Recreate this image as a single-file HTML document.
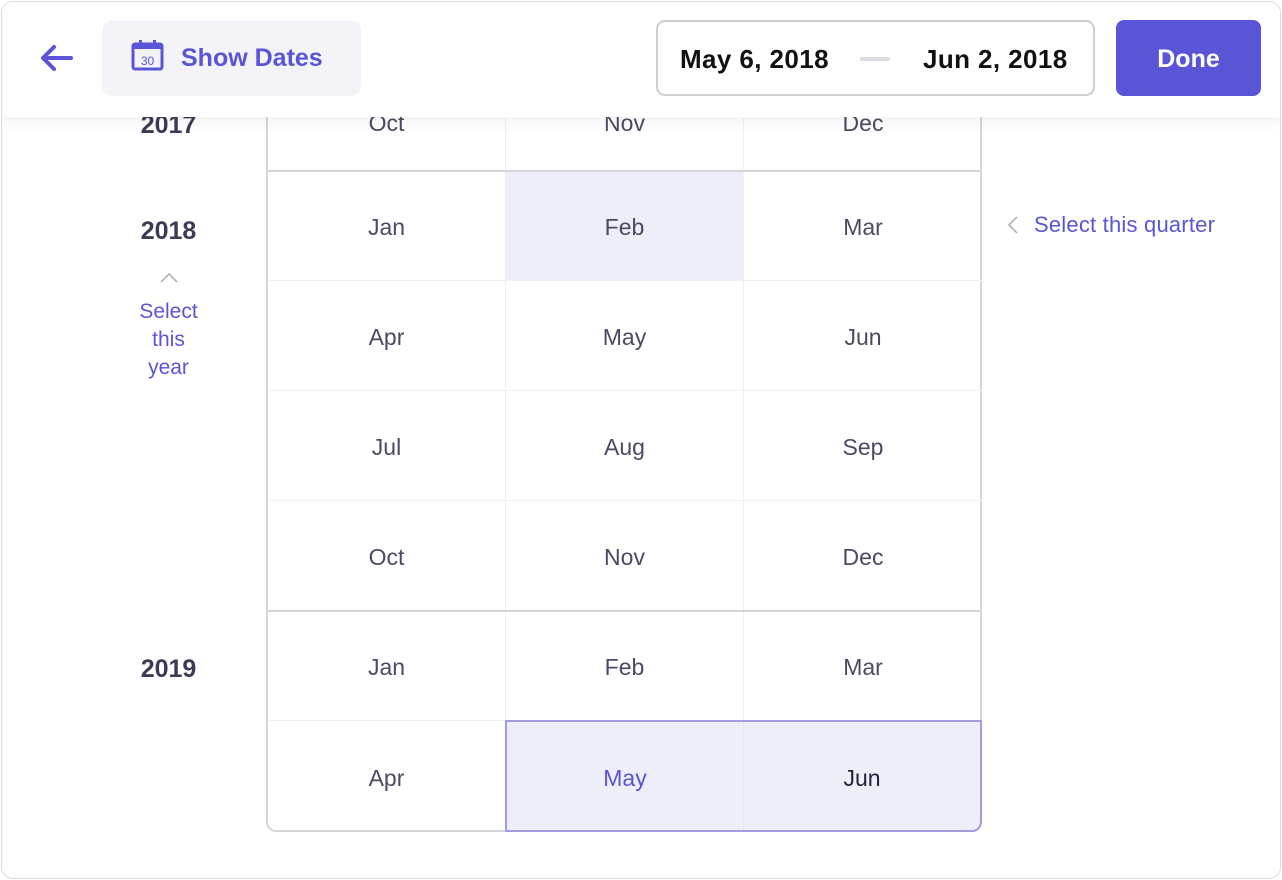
<!DOCTYPE html>
<html><head><style>
*{box-sizing:border-box;margin:0;padding:0}
body{width:1282px;height:880px;background:#fff;font-family:"Liberation Sans",sans-serif;position:relative;overflow:hidden}
.frame{position:absolute;left:1px;top:1px;width:1280px;height:878px;border:1px solid #dcdce0;border-radius:12px;overflow:hidden}
.in{position:absolute;left:-2px;top:-2px;width:1282px;height:880px}
.hdr{position:absolute;left:0;top:0;width:1282px;height:117px;background:#fff;z-index:5;box-shadow:0 6px 14px rgba(0,0,0,0.05)}
.grid{position:absolute;left:266px;top:61px;width:716px;height:771px;border:2px solid #d6d6da;border-top:none;border-radius:0 0 10px 10px}
.c{position:absolute;width:238px;height:110px;display:flex;align-items:center;justify-content:center;font-size:23px;color:#4a4a62;border-right:1px solid #f0f0f4;border-bottom:1px solid #f0f0f4;padding-top:4px}
.yr{position:absolute;left:100px;width:137px;text-align:center;font-size:25px;font-weight:bold;color:#3b3b57}
.sep{position:absolute;left:0;width:712px;height:2px;background:#d6d6da}
</style></head><body>
<div class="frame"><div class="in">
<div class="hdr">
 <svg style="position:absolute;left:38px;top:42px" width="36" height="32" viewBox="0 0 36 32"><path d="M33 16H5M16 5L5 16l11 11" stroke="#5a54d6" stroke-width="4" fill="none" stroke-linecap="round" stroke-linejoin="round"/></svg>
 <div style="position:absolute;left:102px;top:20px;width:259px;height:76px;background:#f4f4f8;border-radius:10px"></div>
 <svg style="position:absolute;left:131px;top:39px" width="33" height="32" viewBox="0 0 33 32"><rect x="2" y="5" width="29" height="25" rx="2" fill="none" stroke="#5a54d6" stroke-width="3"/><rect x="2" y="5" width="29" height="5" fill="#5a54d6"/><rect x="8" y="1" width="3" height="6" fill="#5a54d6"/><rect x="22" y="1" width="3" height="6" fill="#5a54d6"/><text x="16.5" y="26" font-size="12" text-anchor="middle" fill="#5a54d6" font-family="Liberation Sans">30</text></svg>
 <div style="position:absolute;left:181px;top:44px;font-size:25px;font-weight:bold;color:#5a54d6">Show Dates</div>
 <div style="position:absolute;left:656px;top:20px;width:439px;height:76px;border:2px solid #cfcfd3;border-radius:9px"></div>
 <div style="position:absolute;left:680px;top:44px;font-size:26px;font-weight:bold;color:#111;letter-spacing:0.4px">May 6, 2018</div>
 <div style="position:absolute;left:860px;top:57px;width:30px;height:4px;background:#dcdce0;border-radius:2px"></div>
 <div style="position:absolute;left:923px;top:44px;font-size:26px;font-weight:bold;color:#111;letter-spacing:0.4px">Jun 2, 2018</div>
 <div style="position:absolute;left:1116px;top:20px;width:145px;height:76px;background:#5a54d6;border-radius:8px;color:#fff;font-size:25px;font-weight:bold;display:flex;align-items:center;justify-content:center;padding-top:3px">Done</div>
</div>
<div class="yr" style="top:111px">2017</div>
<div class="yr" style="top:217px">2018</div>
<svg style="position:absolute;left:159px;top:272px" width="20" height="12"><path d="M2 10l8-8 8 8" stroke="#aaa" stroke-width="1.5" fill="none"/></svg>
<div style="position:absolute;left:101px;top:298px;width:135px;text-align:center;font-size:21px;line-height:28px;color:#5a54d6">Select<br>this<br>year</div>
<div class="yr" style="top:655px">2019</div>
<svg style="position:absolute;left:1007px;top:215px" width="12" height="20"><path d="M10 2l-8 8 8 8" stroke="#aaa" stroke-width="1.5" fill="none"/></svg>
<div style="position:absolute;left:1034px;top:212px;font-size:22px;color:#5a54d6;letter-spacing:0.2px">Select this quarter</div>
<div class="grid">
 <div class="c" style="left:0;top:0;padding-top:16px">Oct</div><div class="c" style="left:238px;top:0;padding-top:16px">Nov</div><div class="c" style="left:476px;top:0;border-right:none;padding-top:16px">Dec</div>
 <div class="c" style="left:0;top:110px">Jan</div><div class="c" style="left:238px;top:110px;background:#eeeef9">Feb</div><div class="c" style="left:476px;top:110px;border-right:none">Mar</div>
 <div class="c" style="left:0;top:220px">Apr</div><div class="c" style="left:238px;top:220px">May</div><div class="c" style="left:476px;top:220px;border-right:none">Jun</div>
 <div class="c" style="left:0;top:330px">Jul</div><div class="c" style="left:238px;top:330px">Aug</div><div class="c" style="left:476px;top:330px;border-right:none">Sep</div>
 <div class="c" style="left:0;top:440px">Oct</div><div class="c" style="left:238px;top:440px">Nov</div><div class="c" style="left:476px;top:440px;border-right:none">Dec</div>
 <div class="c" style="left:0;top:550px">Jan</div><div class="c" style="left:238px;top:550px">Feb</div><div class="c" style="left:476px;top:550px;border-right:none">Mar</div>
 <div class="c" style="left:0;top:660px;border-bottom:none">Apr</div>
 <div class="sep" style="top:109px"></div><div class="sep" style="top:549px"></div>
 <div style="position:absolute;left:237px;top:659px;width:477px;height:112px;border:2px solid #a09ce2;border-radius:0 0 10px 0;background:#eeeef9">
  <div style="position:absolute;left:0;top:0;width:237px;height:108px;border-right:1px solid #e4e4f2;display:flex;align-items:center;justify-content:center;font-size:23px;color:#5a54d6;padding-top:4px">May</div>
  <div style="position:absolute;left:237px;top:0;width:236px;height:108px;display:flex;align-items:center;justify-content:center;font-size:23px;color:#22223a;padding-top:4px">Jun</div>
 </div>
</div>
</div></div>
</body></html>
